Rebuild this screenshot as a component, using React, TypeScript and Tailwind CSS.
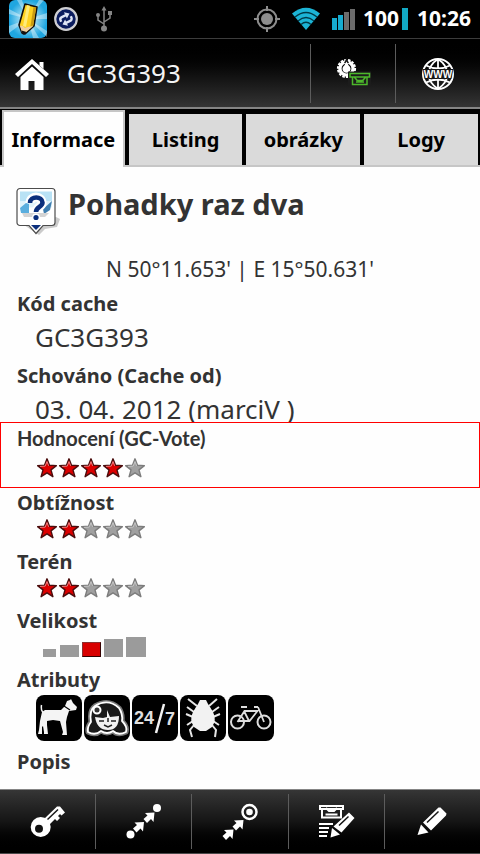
import React, { useState } from 'react';

const STAR = "M10 .8l2.5 6.5 6.9.3-5.4 4.3 1.9 6.8-5.9-3.9-5.9 3.9 1.9-6.8L.6 7.6l6.9-.3z";

const Stars: React.FC<{ value: number; label: string }> = ({ value, label }) => (
    <div className="flex h-6 items-center gap-[2px] pl-5" role="img" aria-label={`${label}: ${value} / 5`}>
        {[1, 2, 3, 4, 5].map((n) => (
            <svg key={n} viewBox="0 0 20 20" className="h-5 w-5">
                <path d={STAR} fill={n <= value ? "#dc0000" : "#a0a0a0"} stroke={n <= value ? "#4a0d0d" : "#7c7c7c"} strokeWidth="1.4" strokeLinejoin="round" />
                <path d="M3 8.400l5.200-.3L10 3.600l1.600 4.200" fill="none" stroke={n <= value ? "#f08080" : "#c4c4c4"} strokeWidth="1" />
            </svg>
        ))}
    </div>
)

const Label: React.FC<{ children: React.ReactNode }> = ({ children }) => (
    <h2 className="text-xl leading-7 font-bold">{children}</h2>
)

const StatusBar = () => (
    <div className="flex h-[38px] items-center justify-between bg-black px-[9px] text-white">
        <div className="flex h-full items-center">
            <svg viewBox="0 0 38 38" className="h-[38px] w-[38px]">
                <defs>
                    <radialGradient id="sky">
                        <stop offset="0" stopColor="#e9faff" />
                        <stop offset="1" stopColor="#1fa6e0" />
                    </radialGradient>
                </defs>
                <rect width="38" height="38" rx="6" fill="url(#sky)" />
                <path d="M19 19L0 9v5zM19 19L8 0h5zM19 19L30 0h5zM19 19l19-6v6zM19 19l19 12v6zM19 19L0 26v7zM19 19l5 19h6z" fill="#fff" opacity=".4" />
                <path d="M16 4l12 3-3 19-9 8-3-1-3-8z" fill="#ffd21f" stroke="#111" strokeWidth="1.6" strokeLinejoin="round" />
                <path d="M24.500 7l2.700.8L24.300 25l-3 2z" fill="#c99a12" />
                <path d="M18 5l3 .8L17 27l-3-1z" fill="#ffec7a" />
                <path d="M10.800 25.500l3 .5 2 2 3-1 5.500-1-8.300 7-3-.5z" fill="#f0cfa0" />
                <path d="M12.500 30.500l5 1.500-2.500 2.800-1.500-.5z" fill="#111" />
            </svg>
            <svg viewBox="0 0 24 24" className="ml-[7px] h-6 w-6">
                <circle cx="12" cy="12" r="10.800" fill="#0b1c5e" stroke="#cfcfd2" strokeWidth="2.200" />
                <g transform="rotate(-25 12 12)" fill="none" stroke="#dfe5f5" strokeWidth="2.400">
                    <path d="M6.500 12.500V11a2.500 2.500 0 0 1 2.500-2.500h4.500" />
                    <path d="M17.500 11.500V13a2.500 2.500 0 0 1-2.500 2.500h-4.500" />
                    <path d="M13 5l4.500 3.500L13 12zM11 12l-4.500 3.500L11 19z" fill="#dfe5f5" stroke="none" />
                </g>
            </svg>
            <svg viewBox="0 0 18 26" className="ml-[17px] h-[26px] w-[18px]" fill="none" stroke="#858585" strokeWidth="1.500">
                <path d="M9 3v19M9 18l-6-4V9M9 16l6-4V7" />
                <path d="M9 0l2.500 4.500h-5z" fill="#858585" stroke="none" />
                <circle cx="9" cy="22.500" r="3" fill="#858585" stroke="none" />
                <circle cx="3" cy="9" r="2" fill="#858585" stroke="none" />
                <path d="M13 5h4v4h-4z" fill="#858585" stroke="none" />
            </svg>
        </div>
        <div className="flex items-center">
            <svg viewBox="0 0 26 26" className="h-[26px] w-[26px]" fill="none" stroke="#8d8d8d" strokeWidth="2">
                <circle cx="13" cy="13" r="9.500" />
                <circle cx="13" cy="13" r="6" fill="#8d8d8d" stroke="none" />
                <path d="M13 0v5M13 21v5M0 13h5M21 13h5" />
            </svg>
            <svg viewBox="0 0 30 24" className="ml-[11px] h-6 w-[30px]">
                <path d="M15 23L1 6.500Q15-5 29 6.500z" fill="#1cb4d6" />
                <path d="M4 10Q15 1 26 10M7 14Q15 7 23 14M10 17.500Q15 13 20 17.500" fill="none" stroke="#003947" strokeWidth="1.300" />
            </svg>
            <svg viewBox="0 0 24 22" className="ml-[10px] h-[22px] w-6">
                <path d="M1 10h5v12H1zM7 7h5v15H7z" fill="#16acd0" />
                <path d="M13 4h5v18h-5zM19 1h5v21h-5z" fill="#6b6b6b" />
            </svg>
            <span className="ml-2 text-[21px] font-bold">100</span>
            <span className="ml-[3px] h-[22px] w-[6px] bg-[#12a9c4]" />
            <span className="ml-[9px] text-[21px] font-bold">10:26</span>
        </div>
    </div>
)

const Header = () => (
    <header className="flex h-[71px] items-stretch border-t border-b-2 border-t-[#3c3c3c] border-b-[#858585] bg-linear-to-b from-black to-[#353535] text-white">
        <button type="button" aria-label="Domů" className="flex items-center pt-1 pl-[15px]">
            <svg viewBox="0 0 34 34" className="h-[34px] w-[34px]" fill="#fff">
                <path d="M17 1l17 15-3 3L17 6 3 19l-3-3z" />
                <path d="M17 8.500L28.500 19v13h-9v-9h-6v9H5.500V19zM24.500 4h4v7l-4-3.500z" />
            </svg>
        </button>
        <h1 className="flex flex-1 items-center pt-px pl-[18px] text-[26px] text-[#f4f4f4]">GC3G393</h1>
        <div className="mt-[5px] mb-1 flex">
            <button type="button" aria-label="Zapsat" className="flex w-[85px] items-center justify-center border-l border-[#5c5c5c]">
                <svg viewBox="0 0 36 34" className="h-[34px] w-9">
                    <circle cx="11.500" cy="11.500" r="8.600" fill="none" stroke="#fff" strokeWidth="2" strokeDasharray="2.600 1.200" />
                    <circle cx="11.500" cy="11.500" r="6.600" fill="none" stroke="#fff" strokeWidth="3.400" />
                    <path d="M11.500 1l2.500 5h-5z" fill="#151515" />
                    <path d="M11.500 4.500l2.200 4a4 4 0 1 1-4.400 0z" fill="#fff" />
                    <path d="M13 14.500h23V29H13z" fill="#1c1c1c" />
                    <path d="M15 16.500h19.500v3.500H15zM17.500 20h14.500v7.500H17.500zM19 20.500c2 0 2 3 4 3h4c2 0 2-3 4-3M21 25h8" fill="none" stroke="#4cb82b" strokeWidth="1.500" />
                </svg>
            </button>
            <button type="button" aria-label="Web" className="flex w-[85px] items-center justify-center border-l border-[#5c5c5c]">
                <svg viewBox="0 0 34 34" className="h-[34px] w-[34px]">
                    <path d="M17 2v30M5 8.500Q17 14.500 29 8.500M5 25.500Q17 19.500 29 25.500M17 2Q8 8 7.500 17 8 26 17 32M17 2q9 6 9.500 15Q26 26 17 32" fill="none" stroke="#fff" strokeWidth="1.800" />
                    <path d="M2 12.500h30v9H2z" fill="#1b1b1b" />
                    <circle cx="17" cy="17" r="15" fill="none" stroke="#fff" strokeWidth="2" />
                    <text x="17" y="20.500" textAnchor="middle" fontFamily="Liberation Sans, sans-serif" fontSize="10" fontWeight="700" fill="#fff" stroke="#151515" strokeWidth="2" paintOrder="stroke">WWW</text>
                </svg>
            </button>
        </div>
    </header>
)

const TABS = ['Informace', 'Listing', 'obrázky', 'Logy'];

const Tabs = () => {
    const [ active, setActive ] = useState(0);

    return (
        <nav className="flex h-[58px] gap-1 border-b-2 border-[#c6c6c6] bg-black px-[2px] pt-px text-xl font-bold text-black">
            {TABS.map((tab, i) => (
                <button
                    key={tab}
                    type="button"
                    onClick={() => setActive(i)}
                    className={i === active
                        ? "-mb-[2px] min-w-0 flex-[119] border-2 border-b-0 border-[#c6c6c6] bg-[#fefefe]"
                        : "mt-1 min-w-0 flex-[114] bg-[#dadada]"}
                >
                    {tab}
                </button>
            ))}
        </nav>
    )
}

const CacheIcon = () => (
    <svg viewBox="0 0 44 50" className="h-[50px] w-11">
        <path d="M8 38l32-8 4 2-3 8-12 2-6 6z" fill="#000" opacity=".2" />
        <path d="M4 1.500h32a3 3 0 0 1 3 3v31a3 3 0 0 1-3 3h-9l-7 8-7-8H4a3 3 0 0 1-3-3v-31a3 3 0 0 1 3-3z" fill="#fff" stroke="#4c4c4c" strokeWidth="1.200" />
        <path d="M4 4.500h32v10H4z" fill="#b9e2f5" />
        <path d="M4 14.500h32v6H4z" fill="#e0f3fb" />
        <path d="M4 21l6-5 3 1v9H5z" fill="#5aaede" />
        <path d="M27 22l9-8-2 9-6 4z" fill="#3e7eb0" />
        <path d="M6 26h27l-4 4H8z" fill="#d4d4d4" />
        <path d="M14 16c0-8 12-8 12 0 0 4-6 4-6 9.500" fill="none" stroke="#fff" strokeWidth="9" />
        <path d="M14 16c0-7.500 12.500-7 12.500-.5 0 4.500-6.500 4.500-6.500 9.500" fill="none" stroke="#0b2f7c" strokeWidth="4.600" />
        <circle cx="20" cy="30.500" r="4" fill="#fff" />
        <circle cx="20" cy="30.500" r="2.600" fill="#0b2f7c" />
        <path d="M15 38h10l-5 5z" fill="#0b2f7c" />
    </svg>
)

const Tile: React.FC<{ label: string; children: React.ReactNode }> = ({ label, children }) => (
    <svg viewBox="0 0 46 46" role="img" aria-label={label} className="h-[46px] w-[46px] rounded-lg bg-black">{children}</svg>
)

const Attributes = () => (
    <div className="mt-px flex gap-[2px] pl-[19px]">
        <Tile label="Psi">
            <path d="M6 17l3-2 16 0 4-4 2-5 3-1 1-1 2 4 4 4-1 3-7 1-2 6-1 5 1 13-5 0 1-3-3-11-7-1-6 1 0 4 1 9-4 0 0-2-1-6-1 1 0 7-4 0 1-4 1-9z" fill="#f4f4f4" />
            <path d="M7.500 18Q4.500 15 5.500 10" fill="none" stroke="#f4f4f4" strokeWidth="1.500" />
            <path d="M28 11l6 4" stroke="#000" strokeWidth="1.200" />
        </Tile>
        <Tile label="Krásný výhled">
            <g fill="none" stroke="#fff" strokeLinejoin="round">
                <path d="M4 37Q3 32 7 27 5 15 11 11 24 3 35 13q4 6 3 13 6 6 4 11-8 4-13-1-6 4-12 0-6 5-13 1z" stroke="#777" strokeWidth="5" />
                <path d="M4 37Q3 32 7 27 5 15 11 11 24 3 35 13q4 6 3 13 6 6 4 11-8 4-13-1-6 4-12 0-6 5-13 1z" fill="#1a1a1a" strokeWidth="1.800" />
                <circle cx="13" cy="15" r="3.500" fill="#333" strokeWidth="2" />
            </g>
            <path d="M11 22l8 1 4-1V15l3 7 9-1q0 14-11 14T11 22z" fill="#f2f2f2" />
            <path d="M15 26h5M27 26h5M20 30l4 2 4-2M24 23v4" fill="none" stroke="#222" strokeWidth="1.500" />
        </Tile>
        <Tile label="24/7">
            <text x="2" y="29" fontFamily="Liberation Sans, sans-serif" fontSize="18" fontWeight="700" fill="#e0e0e0">24</text>
            <text x="33" y="30" fontFamily="Liberation Sans, sans-serif" fontSize="18" fontWeight="700" fill="#e0e0e0">7</text>
            <path d="M32 9l-8 29" stroke="#f2f2f2" strokeWidth="2.500" />
        </Tile>
        <Tile label="Klíšťata">
            <path d="M17 11L8 4M29 11l8-7M14 17l-7-5M32 17l7-5M13 22l-7-3M33 22l7-3M13 26l-6 4M33 26l6 4M14 30l-4 5 2 7M32 30l4 5-1 7" fill="none" stroke="#e6e6e6" strokeWidth="2" />
            <path d="M20 5h6l2 4 2 3 3 5q4 8-1 15l-6 4h-6l-6-4q-5-7-1-15l3-5 2-3z" fill="#f2f2f2" />
        </Tile>
        <Tile label="Kola">
            <g fill="none" stroke="#ddd" strokeWidth="2">
                <circle cx="9.500" cy="27" r="6.500" />
                <circle cx="36" cy="27" r="6.500" />
                <path d="M9.500 27l7-11h13l-8 10h-12M16 16l5 10M30 12l6 15M26 12h4M13 12h6" strokeWidth="1.800" />
            </g>
        </Tile>
    </div>
)

const Info = () => (
    <main className="flex-1 overflow-hidden bg-[#fefefe] text-[#333]">
        <div className="flex items-start px-4 pt-5">
            <CacheIcon />
            <h1 className="ml-2 text-[29px] leading-[34px] font-bold">Pohadky raz dva</h1>
        </div>
        <p className="mt-[18px] text-center text-[21px] leading-7">N 50°11.653' | E 15°50.631'</p>
        <section className="mt-[7px] mb-3 px-[17px]">
            <Label>Kód cache</Label>
            <p className="h-8 pl-[18px] text-[26px] leading-[38px]">GC3G393</p>
        </section>
        <section className="px-[17px]">
            <Label>Schováno (Cache od)</Label>
            <p className="h-8 pl-[18px] text-[26px] leading-[38px]">03. 04. 2012 (marciV )</p>
        </section>
        <section className="relative border border-[#f00] bg-[#fefefe] px-4 pt-px pb-[7px]">
            <h2 className="pb-1 font-[Lato,sans-serif] text-xl leading-7 font-bold">Hodnocení (GC-Vote)</h2>
            <Stars value={4} label="Hodnocení" />
        </section>
        <div className="flex flex-col gap-[7px] px-[17px] pt-px">
            <section>
                <Label>Obtížnost</Label>
                <Stars value={2} label="Obtížnost" />
            </section>
            <section>
                <Label>Terén</Label>
                <Stars value={2} label="Terén" />
            </section>
            <section>
                <Label>Velikost</Label>
                <div className="flex h-6 items-end gap-[3px] pb-[2px] pl-[26px]">
                    <span className="h-2 w-[13px] bg-[#9b9b9b]" />
                    <span className="ml-px h-3 w-[19px] bg-[#9b9b9b]" />
                    <span className="h-[15px] w-[19px] border border-t-[#8a3030] border-r-[#300] border-b-[#300] border-l-[#8a3030] bg-[#d80000]" />
                    <span className="h-[18px] w-[19px] bg-[#9b9b9b]" />
                    <span className="h-5 w-5 bg-[#9b9b9b]" />
                </div>
            </section>
            <section>
                <Label>Atributy</Label>
                <Attributes />
            </section>
            <section>
                <Label>Popis</Label>
            </section>
        </div>
    </main>
)

const ARROW = "M0 0l-9.500.5 2.500 2.500-4 3.500 3.500 4 4-4 2.500 3z";

const ACTIONS = [
    {
        name: 'Nápověda',
        icon: (
            <>
                <circle cx="12.700" cy="25" r="10" fill="#fff" />
                <circle cx="11" cy="26.700" r="4" fill="#111" />
                <path d="M16 17L29 4.500h3l5 6-3.500 3-1.500-1.500-2 2 2 2-3 3-2-2-6 6z" fill="#fff" />
                <path d="M19.500 17.500L30 7.500" stroke="#161616" strokeWidth="1.500" />
            </>
        ),
    },
    {
        name: 'Trasa',
        icon: (
            <g fill="#fff">
                <circle cx="6.500" cy="32.500" r="4" />
                <circle cx="33" cy="6" r="4" />
                <path d={ARROW} transform="translate(20 20)" />
                <path d={ARROW} transform="translate(30.500 10.500)" />
            </g>
        ),
    },
    {
        name: 'Navigovat',
        icon: (
            <g fill="#fff">
                <circle cx="29.500" cy="10" r="7" fill="none" stroke="#fff" strokeWidth="2.500" />
                <circle cx="29.500" cy="10" r="3.300" />
                <path d={ARROW} transform="translate(13.500 27.500)" />
                <path d={ARROW} transform="translate(23.500 18)" />
            </g>
        ),
    },
    {
        name: 'Zápis',
        icon: (
            <>
                <path d="M4 4h23v3H4zM6 7h19v8.500H6zM10 6l3 3h5l3-3M9.500 12.500h12" fill="none" stroke="#fff" strokeWidth="2" />
                <path d="M3 22h14M3 26h10M3 30h9M3 34h8" stroke="#fff" strokeWidth="2" />
                <path d="M17.500 24.500L33 10.500l5.500 5.500-13 14.500zM16 26l8 6.500-9.500 3z" fill="#fff" />
                <path d="M23 23.500l9.500-9" stroke="#111" strokeWidth="1.500" />
            </>
        ),
    },
    {
        name: 'Upravit',
        icon: (
            <>
                <path d="M11 20.500L26.500 5.500h2l6 6-.5 2L19 28.500zM9 22.500l7.500 8-11 2.500z" fill="#fff" />
                <path d="M15 20.500L26.500 9.500" stroke="#161616" strokeWidth="1.500" />
            </>
        ),
    },
];

const Footer = () => (
    <footer className="flex h-[65px] border-t border-b border-t-[#858585] border-b-[#4a4a4a] bg-linear-to-b from-[#363636] via-[#151515] to-black py-1">
        {ACTIONS.map(({ name, icon }, i) => (
            <button
                key={name}
                type="button"
                aria-label={name}
                className={i < ACTIONS.length - 1 ? "flex flex-1 items-center justify-center border-r border-[#5c5c5c]" : "flex flex-1 items-center justify-center"}
            >
                <svg viewBox="0 0 40 40" className="h-10 w-10">{icon}</svg>
            </button>
        ))}
    </footer>
)

const App: React.FC = () => (
    <div className="flex h-screen flex-col bg-black font-['Noto_Sans',sans-serif]">
        <StatusBar />
        <Header />
        <Tabs />
        <Info />
        <Footer />
    </div>
)

export default App;
